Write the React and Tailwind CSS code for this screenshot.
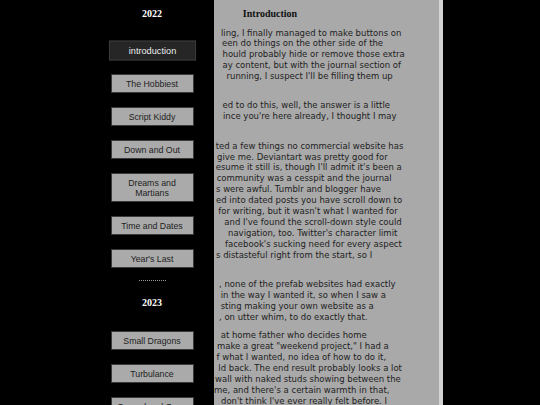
import React from "react";

const paragraphs = [
  [
    ["After much fidd", "ml-[7px]", "ling, I finally managed to make buttons on"],
    ["the left of the scr", "ml-[8px]", "een do things on the other side of the"],
    ["page. I s", "ml-[8.5px]", "hould probably hide or remove those extra"],
    ["buttons that displ", "ml-[8.5px]", "ay content, but with the journal section of"],
    ["the site up and", "ml-[12.5px]", "running, I suspect I'll be filling them up"],
    ["soon enough.", "ml-0", ""],
  ],
  [
    ["If you're wondering why I decid", "ml-[8.5px]", "ed to do this, well, the answer is a little"],
    ["complicated, but s", "ml-[9px]", "ince you're here already, I thought I may"],
    ["as well explain.", "ml-0", ""],
  ],
  [
    ["For a long time, I wan", "ml-[1.7px]", "ted a few things no commercial website has"],
    ["been willing to", "ml-[3px]", "give me. Deviantart was pretty good for"],
    ["art, and I pr", "ml-[1.7px]", "esume it still is, though I'll admit it's been a"],
    ["while, but the", "ml-[2.7px]", "community was a cesspit and the journal"],
    ["journal feature", "ml-[2px]", "s were awful. Tumblr and blogger have"],
    ["always been separat", "ml-[2px]", "ed into dated posts you have scroll down to"],
    ["find, which is fine", "ml-[4.3px]", "for writing, but it wasn't what I wanted for"],
    ["my art,", "ml-[10.3px]", "and I've found the scroll-down style could"],
    ["make for awkward", "ml-[14px]", "navigation, too. Twitter's character limit"],
    ["was too small, and", "ml-[11px]", "facebook's sucking need for every aspect"],
    ["of your life wa", "ml-[2px]", "s distasteful right from the start, so I"],
    ["went looking elsewhere.", "ml-0", ""],
  ],
  [
    ["Unfortunately", "ml-[5px]", ", none of the prefab websites had exactly"],
    ["what I wanted, laid out", "ml-[6.7px]", "in the way I wanted it, so when I saw a"],
    ["friend sugge", "ml-[6.7px]", "sting making your own website as a"],
    ["hobby, I decided", "ml-[5px]", ", on utter whim, to do exactly that."],
  ],
  [
    ["Like any stay", "ml-[6.7px]", "at home father who decides home"],
    ["improvement will", "ml-[3px]", "make a great \"weekend project,\" I had a"],
    ["vague idea o", "ml-[2.5px]", "f what I wanted, no idea of how to do it,"],
    ["and I he", "ml-[4.3px]", "ld back. The end result probably looks a lot"],
    ["like a half-finished dry", "ml-[1px]", "wall with naked studs showing between the"],
    ["the rafters of my ho", "ml-0", "me, and there's a certain warmth in that,"],
    ["a sense of home I", "ml-[7px]", "don't think I've ever really felt before. I"],
    ["hope you'll stick", "ml-[5px]", "around to watch it slowly come together."],
  ],
];

const year2022 = [
  { label: "introduction", active: true },
  { label: "The Hobbiest" },
  { label: "Script Kiddy" },
  { label: "Down and Out" },
  { label: "Dreams and Martians" },
  { label: "Time and Dates" },
  { label: "Year's Last" },
];

const year2023 = [
  { label: "Small Dragons" },
  { label: "Turbulance" },
  { label: "Ground and Gone" },
  { label: "Spring Cleaning" },
];

function NavButton({ label, active }) {
  return (
    <button
      className={
        active
          ? "w-[83px] scale-105 border border-[#3a3a3a] bg-[#262626] px-[4px] py-[3.5px] text-center font-['Liberation_Sans',Arial,sans-serif] text-[8.75px] leading-[10px] text-[#ececec]"
          : "w-[83px] border border-[#3a3a3a] bg-[#aaaaaa] px-[4px] py-[3.5px] text-center font-['Liberation_Sans',Arial,sans-serif] text-[8.75px] leading-[10px] text-[#1e1e1e]"
      }
    >
      {label}
    </button>
  );
}

function YearTitle({ children, className }) {
  return (
    <h3
      className={
        "font-['Liberation_Serif','Times_New_Roman',serif] text-[10px] font-bold leading-[12px] text-white " +
        className
      }
    >
      {children}
    </h3>
  );
}

export default function App() {
  return (
    <div className="relative h-[405px] w-[540px] overflow-hidden bg-black">
      <main className="mx-auto h-full w-[345px] border-x-4 border-[#d3d3d3] bg-[#a9a9a9] pt-[8px]">
        <h1 className="text-center font-['Liberation_Serif','Times_New_Roman',serif] text-[10px] font-bold leading-[12px] text-[#111]">
          Introduction
        </h1>
        <div className="mt-[7.5px] flex flex-col gap-[7.5px] pl-[18.5px] font-['DejaVu_Sans',Verdana,sans-serif] text-[8.5px] leading-[10.9px] text-[#1e1e1e]">
          {paragraphs.map((lines, i) => (
            <p key={i}>
              {lines.map(([hidden, ml, visible], j) => (
                <span key={j} className="flex whitespace-nowrap">
                  <span className="w-[94px] shrink-0 overflow-hidden text-right">{hidden}</span>
                  <span className={ml}>{visible}</span>
                </span>
              ))}
            </p>
          ))}
        </div>
      </main>

      <aside className="absolute left-0 top-0 flex h-full w-[214px] flex-col items-center bg-black pl-[90px] pt-[8px]">
        <YearTitle className="">2022</YearTitle>
        <nav className="mt-[21.3px] flex flex-col items-center gap-[14px]">
          {year2022.map((b) => (
            <NavButton key={b.label} {...b} />
          ))}
        </nav>
        <div className="mt-[11.7px] w-[27px] border-t border-dotted border-[#9a9a9a]" />
        <YearTitle className="mt-[16.3px]">2023</YearTitle>
        <nav className="mt-[22px] flex flex-col items-center gap-[14px]">
          {year2023.map((b) => (
            <NavButton key={b.label} {...b} />
          ))}
        </nav>
      </aside>
    </div>
  );
}
